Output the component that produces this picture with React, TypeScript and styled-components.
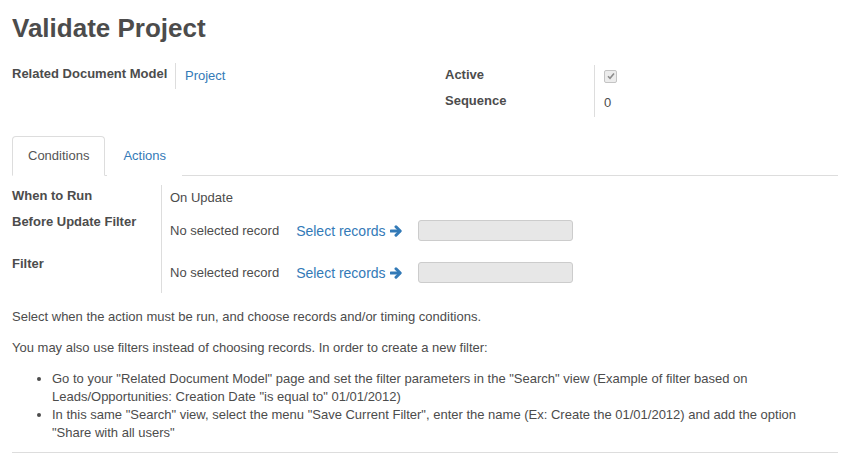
import React, { useState } from 'react';
import styled, { createGlobalStyle } from 'styled-components';

const GlobalStyle = createGlobalStyle`
  body {
    margin: 0;
    background: #fff;
    color: #4c4c4c;
    font-family: 'Liberation Sans', Arial, sans-serif;
    font-size: 13px;
  }
`;

const Sheet = styled.div`
  width: 826px;
  padding: 0 4px 0 12px;
`;

const Title = styled.h1`
  margin: 0;
  padding-top: 11px;
  font-size: 26px;
  line-height: 34px;
  font-weight: 700;
  color: #4c4c4c;
`;

const TopGroups = styled.div`
  display: flex;
  align-items: flex-start;
  margin-top: 18px;
`;

const Group = styled.div<{ $labelWidth: number; $offset?: number }>`
  display: grid;
  grid-template-columns: ${p => p.$labelWidth}px 1fr;
  grid-auto-rows: 26px;
  width: ${p => (p.$offset ? 'auto' : '413px')};
  flex: ${p => (p.$offset ? '1' : 'none')};
  padding-left: ${p => p.$offset || 0}px;
  margin-top: ${p => (p.$offset ? 2 : 0)}px;
`;

const Label = styled.div<{ $pad?: number }>`
  font-weight: 700;
  line-height: 18px;
  padding-top: ${p => p.$pad ?? 2}px;
  border-right: 1px solid #ddd;
`;

const Value = styled.div<{ $pad?: number }>`
  line-height: 18px;
  padding-left: 9px;
  padding-top: ${p => p.$pad ?? 4}px;
`;

const Link = styled.a`
  color: #337ab7;
  text-decoration: none;
  cursor: pointer;
`;

const Check = styled.span`
  display: inline-flex;
  align-items: center;
  justify-content: center;
  width: 11px;
  height: 11px;
  margin-top: 2px;
  border: 1px solid #c4c4c4;
  border-radius: 2px;
  background: #ececec;
`;

const Tabs = styled.ul`
  display: flex;
  list-style: none;
  margin: 19px 0 0;
  padding: 0;
  border-bottom: 1px solid #ddd;
`;

const Tab = styled.li<{ $active?: boolean }>`
  margin: 0 2px -1px 0;
  padding: 10px 15px;
  line-height: 18px;
  border: 1px solid ${p => (p.$active ? '#ddd' : 'transparent')};
  border-bottom-color: ${p => (p.$active ? '#fff' : 'transparent')};
  border-radius: 4px 4px 0 0;
  background: #fff;
  color: ${p => (p.$active ? '#555' : '#337ab7')};
  cursor: pointer;
`;

const Page = styled.div`
  padding-top: 9px;
  border-bottom: 1px solid #ddd;
`;

const FieldTable = styled.div`
  display: grid;
  grid-template-columns: 150px 1fr;
  grid-template-rows: 24px 42px 42px;
  padding-bottom: 2px;
`;

const RowLabel = styled.div<{ $pad: number }>`
  font-weight: 700;
  line-height: 18px;
  padding-top: ${p => p.$pad}px;
  border-right: 1px solid #ddd;
`;

const RowValue = styled.div`
  display: flex;
  align-items: center;
  padding: 1px 0 0 8px;
  line-height: 18px;
`;

const PlainValue = styled.div`
  padding: 4px 0 0 8px;
  line-height: 18px;
`;

const SelectButton = styled.button`
  display: inline-flex;
  align-items: center;
  gap: 4px;
  margin-left: 17px;
  padding: 0;
  border: none;
  background: none;
  font-family: inherit;
  font-size: 14px;
  color: #337ab7;
  cursor: pointer;
`;

const DomainBox = styled.div`
  width: 153px;
  height: 19px;
  margin-left: 16px;
  border: 1px solid #ccc;
  border-radius: 3px;
  background: #e7e7e7;
`;

const Help = styled.div`
  padding-top: 13px;
  line-height: 18px;
  p {
    margin: 0 0 13px;
  }
  ul {
    margin: 0 0 10px;
    padding-left: 40px;
  }
`;

const ArrowIcon = () => (
  <svg width="12" height="12" viewBox="0 0 12 12">
    <path d="M1 6 H9.5" stroke="currentColor" strokeWidth="3.2" strokeLinecap="round" fill="none" />
    <path d="M6 1.8 L10.2 6 L6 10.2" stroke="currentColor" strokeWidth="3" strokeLinecap="round" strokeLinejoin="round" fill="none" />
  </svg>
);

const filterRows = [
  { label: 'Before Update Filter' },
  { label: 'Filter' },
];

export default function App() {
  const [tab, setTab] = useState('conditions');

  return (
    <Sheet>
      <GlobalStyle />
      <Title>Validate Project</Title>

      <TopGroups>
        <Group $labelWidth={164}>
          <Label>Related Document Model</Label>
          <Value><Link>Project</Link></Value>
        </Group>
        <Group $labelWidth={150} $offset={20}>
          <Label $pad={1}>Active</Label>
          <Value $pad={2}>
            <Check>
              <svg width="8" height="8" viewBox="0 0 8 8">
                <path d="M1 4.3 L3 6.3 L7 1.5" fill="none" stroke="#8c8c8c" strokeWidth="1.6" />
              </svg>
            </Check>
          </Value>
          <Label $pad={1}>Sequence</Label>
          <Value $pad={3}>0</Value>
        </Group>
      </TopGroups>

      <Tabs>
        <Tab $active={tab === 'conditions'} onClick={() => setTab('conditions')}>Conditions</Tab>
        <Tab $active={tab === 'actions'} onClick={() => setTab('actions')}>Actions</Tab>
      </Tabs>

      <Page>
        <FieldTable>
          <RowLabel $pad={2}>When to Run</RowLabel>
          <PlainValue>On Update</PlainValue>
          {filterRows.map(r => (
            <React.Fragment key={r.label}>
              <RowLabel $pad={4}>{r.label}</RowLabel>
              <RowValue>
                No selected record
                <SelectButton>
                  Select records <ArrowIcon />
                </SelectButton>
                <DomainBox />
              </RowValue>
            </React.Fragment>
          ))}
        </FieldTable>

        <Help>
          <p>Select when the action must be run, and choose records and/or timing conditions.</p>
          <p>You may also use filters instead of choosing records. In order to create a new filter:</p>
          <ul>
            <li>Go to your "Related Document Model" page and set the filter parameters in the "Search" view (Example of filter based on Leads/Opportunities: Creation Date "is equal to" 01/01/2012)</li>
            <li>In this same "Search" view, select the menu "Save Current Filter", enter the name (Ex: Create the 01/01/2012) and add the option "Share with all users"</li>
          </ul>
        </Help>
      </Page>
    </Sheet>
  );
}
